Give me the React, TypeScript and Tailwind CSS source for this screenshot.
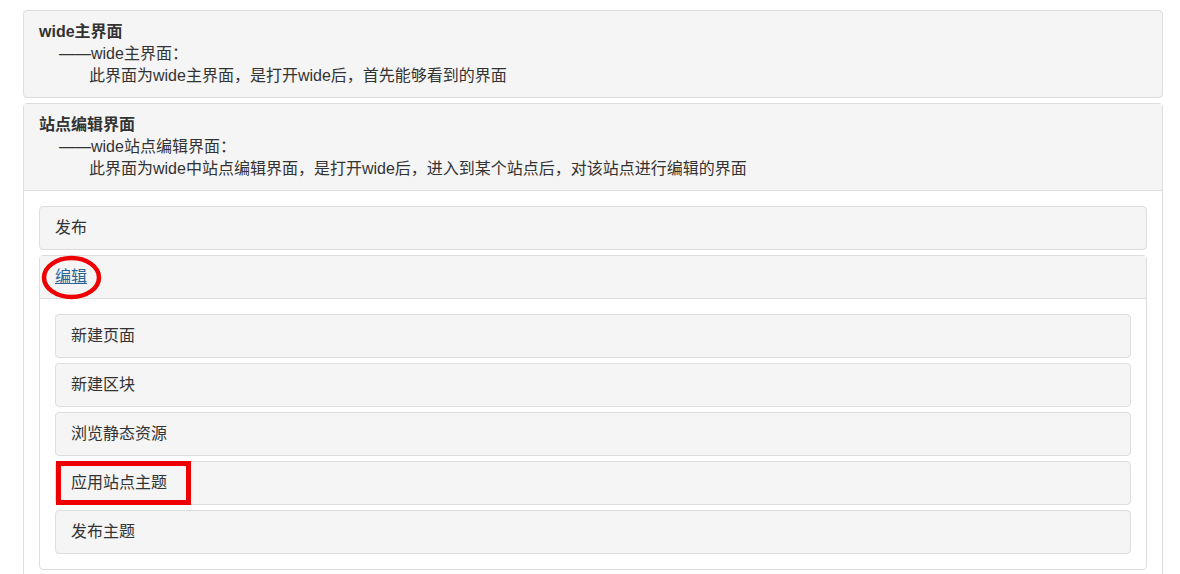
import React from "react";

const font = { fontFamily: '"Liberation Sans", "Noto Sans CJK SC", sans-serif' };

function Item({ children, highlight }: { children: React.ReactNode; highlight?: boolean }) {
  return (
    <div className="relative rounded-[4px] border border-[#dddddd] bg-[#f5f5f5] px-[15px] pt-[10px] pb-[10px] text-[16px] leading-[22px] text-[#333333]">
      {children}
      {highlight && (
        <div className="absolute -top-px left-0 h-[44px] w-[135px] border-[5px] border-[#ee0000]" />
      )}
    </div>
  );
}

export default function App() {
  return (
    <div className="h-[574px] w-[1180px] overflow-hidden bg-white" style={font}>
      <div className="ml-[23px] w-[1140px] pt-[10px]">
        <div className="rounded-[4px] border border-[#dddddd] bg-[#f5f5f5] px-[15px] pt-[10px] pb-[10px] text-[16px] leading-[22px] text-[#333333]">
          <div className="font-bold">wide主界面</div>
          <div className="pl-[20px]">——wide主界面：</div>
          <div className="pl-[50px]">此界面为wide主界面，是打开wide后，首先能够看到的界面</div>
        </div>

        <div className="mt-[5px] rounded-[4px] border border-[#dddddd] bg-white">
          <div className="border-b border-[#dddddd] bg-[#f5f5f5] px-[15px] pt-[10px] pb-[10px] text-[16px] leading-[22px] text-[#333333]">
            <div className="font-bold">站点编辑界面</div>
            <div className="pl-[20px]">——wide站点编辑界面：</div>
            <div className="pl-[50px]">此界面为wide中站点编辑界面，是打开wide后，进入到某个站点后，对该站点进行编辑的界面</div>
          </div>
          <div className="flex flex-col gap-[5px] p-[15px]">
            <Item>发布</Item>
            <div className="relative rounded-[4px] border border-[#dddddd] bg-white">
              <div className="border-b border-[#dddddd] bg-[#f5f5f5] px-[15px] pt-[10px] pb-[10px] text-[16px] leading-[22px]">
                <a className="text-[#2a6496] underline">编辑</a>
              </div>
              <svg className="pointer-events-none absolute left-0 -top-px" width="64" height="46" viewBox="0 0 64 46">
                <ellipse cx="31.5" cy="22.5" rx="27.5" ry="19.5" fill="none" stroke="#ee0000" strokeWidth="4.5" />
              </svg>
              <div className="flex flex-col gap-[5px] p-[15px]">
                <Item>新建页面</Item>
                <Item>新建区块</Item>
                <Item>浏览静态资源</Item>
                <Item highlight>应用站点主题</Item>
                <Item>发布主题</Item>
              </div>
            </div>
          </div>
        </div>
      </div>
    </div>
  );
}
